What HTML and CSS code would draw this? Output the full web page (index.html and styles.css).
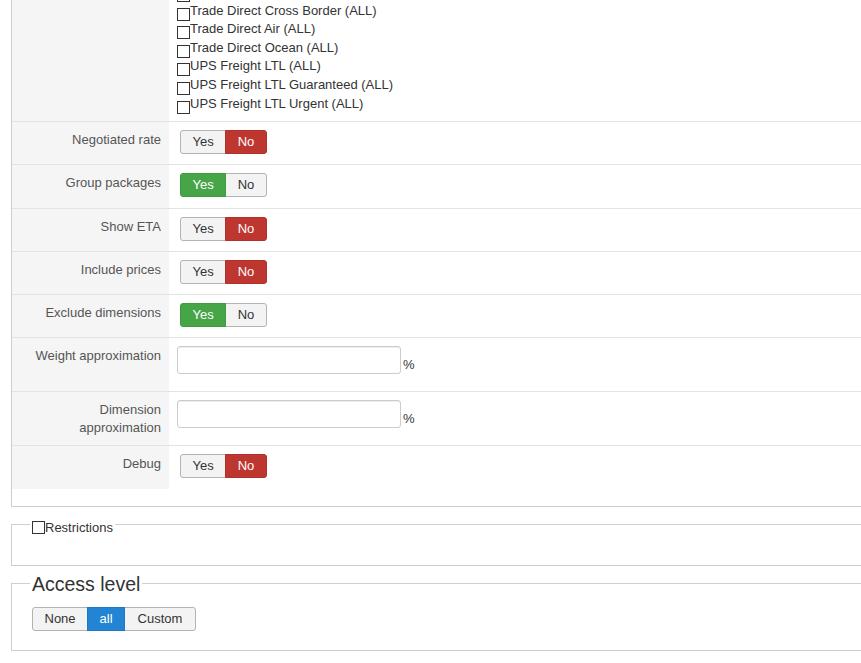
FILE: index.html
```html
<!DOCTYPE html>
<html lang="en">
<head>
<meta charset="utf-8">
<title>Shipping method settings</title>
<link rel="stylesheet" href="styles.css">
</head>
<body>
<div class="page">
  <div class="settings-box">
    <div class="row row-first">
      <div class="label-cell"></div>
      <div class="field-cell">
        <ul class="check-list">
          <li><span class="cb"></span></li>
          <li><span class="cb"></span>Trade Direct Cross Border (ALL)</li>
          <li><span class="cb"></span>Trade Direct Air (ALL)</li>
          <li><span class="cb"></span>Trade Direct Ocean (ALL)</li>
          <li><span class="cb"></span>UPS Freight LTL (ALL)</li>
          <li><span class="cb"></span>UPS Freight LTL Guaranteed (ALL)</li>
          <li><span class="cb"></span>UPS Freight LTL Urgent (ALL)</li>
        </ul>
      </div>
    </div>
    <div class="row">
      <div class="label-cell">Negotiated rate</div>
      <div class="field-cell">
        <div class="toggle"><span class="btn">Yes</span><span class="btn btn-danger">No</span></div>
      </div>
    </div>
    <div class="row">
      <div class="label-cell">Group packages</div>
      <div class="field-cell">
        <div class="toggle"><span class="btn btn-success">Yes</span><span class="btn">No</span></div>
      </div>
    </div>
    <div class="row">
      <div class="label-cell">Show ETA</div>
      <div class="field-cell">
        <div class="toggle"><span class="btn">Yes</span><span class="btn btn-danger">No</span></div>
      </div>
    </div>
    <div class="row">
      <div class="label-cell">Include prices</div>
      <div class="field-cell">
        <div class="toggle"><span class="btn">Yes</span><span class="btn btn-danger">No</span></div>
      </div>
    </div>
    <div class="row">
      <div class="label-cell">Exclude dimensions</div>
      <div class="field-cell">
        <div class="toggle"><span class="btn btn-success">Yes</span><span class="btn">No</span></div>
      </div>
    </div>
    <div class="row">
      <div class="label-cell">Weight approximation</div>
      <div class="field-cell">
        <div class="input-wrap"><input class="num-input" type="text"><span class="unit">%</span></div>
      </div>
    </div>
    <div class="row">
      <div class="label-cell">Dimension<br>approximation</div>
      <div class="field-cell">
        <div class="input-wrap"><input class="num-input" type="text"><span class="unit">%</span></div>
      </div>
    </div>
    <div class="row">
      <div class="label-cell">Debug</div>
      <div class="field-cell">
        <div class="toggle"><span class="btn">Yes</span><span class="btn btn-danger">No</span></div>
      </div>
    </div>
  </div>

  <fieldset class="restrictions">
    <legend class="small-legend"><span class="cb cb-legend"></span>Restrictions</legend>
  </fieldset>

  <fieldset class="access">
    <legend class="big-legend">Access level</legend>
    <div class="toggle toggle-flush"><span class="btn">None</span><span class="btn btn-primary">all</span><span class="btn btn-wide">Custom</span></div>
  </fieldset>
</div>
</body>
</html>
```

FILE: styles.css
```css
html, body {
  margin: 0;
  padding: 0;
  overflow: hidden;
  background: #fff;
}

body {
  font-family: "Liberation Sans", Arial, sans-serif;
  font-size: 13px;
  line-height: 18px;
  color: #333;
}

.page {
  width: 900px;
  padding-left: 11px;
}

.settings-box {
  border: 1px solid #cfcfcf;
  border-top: 0;
  margin-top: -30px;
  padding-bottom: 17px;
}

.row {
  display: grid;
  grid-template-columns: 157px 1fr;
  border-top: 1px solid #e3e3e3;
}

.row-first {
  border-top: 0;
}

.label-cell {
  background: #f5f5f5;
  color: #555;
  text-align: right;
  padding: 9px 8px 0 0;
}

.field-cell {
  padding: 8px 0 10.25px 8px;
}

.row-first .field-cell {
  padding: 13px 0 8px 8px;
}

.check-list {
  list-style: none;
  margin: 0;
  padding: 0;
}

.check-list li {
  height: 18.6px;
  white-space: nowrap;
}

.cb {
  display: inline-block;
  width: 11px;
  height: 11px;
  border: 1px solid #333;
  background: #fff;
  vertical-align: -6px;
}

.cb-legend {
  vertical-align: -2px;
}

.toggle {
  display: inline-flex;
  margin-left: 3px;
}

.toggle-flush {
  margin-left: 0;
}

.btn {
  display: block;
  box-sizing: border-box;
  height: 24px;
  padding: 0 11.5px;
  line-height: 22px;
  border: 1px solid #b3b3b3;
  background: #f3f3f3;
  color: #333;
}

.btn-wide {
  padding: 0 12.5px;
}

.btn + .btn {
  margin-left: -1px;
}

.toggle .btn:first-child {
  border-radius: 3px 0 0 3px;
}

.toggle .btn:last-child {
  border-radius: 0 3px 3px 0;
}

.btn-danger {
  background: #bd362f;
  border-color: #b1312a;
  color: #fff;
  position: relative;
}

.btn-success {
  background: #46a546;
  border-color: #3f9a3f;
  color: #fff;
  position: relative;
}

.btn-primary {
  background: #2384d3;
  border-color: #1f78c1;
  color: #fff;
  position: relative;
}

.input-wrap {
  display: flex;
  align-items: flex-end;
  margin-bottom: 6.75px;
}

.num-input {
  box-sizing: border-box;
  width: 224px;
  height: 28px;
  margin: 0;
  padding: 4px 6px;
  border: 1px solid #ccc;
  border-radius: 3px;
  background: #fff;
  box-shadow: inset 0 1px 1px rgba(0, 0, 0, 0.075);
  font: inherit;
  color: #555;
}

.unit {
  margin-left: 2px;
  line-height: 18px;
}

fieldset {
  margin: 6px 0 0;
  border: 1px solid #cfcfcf;
  min-width: 0;
}

.restrictions {
  padding: 0 20px 28px;
}

.access {
  padding: 11px 20px 19px;
}

legend {
  margin-left: -2px;
}

.small-legend {
  padding: 6px 2px 0;
  font-size: 13px;
  line-height: 18px;
}

.big-legend {
  padding: 0 2px;
  font-size: 19.5px;
  line-height: 24px;
  color: #333;
}
```
